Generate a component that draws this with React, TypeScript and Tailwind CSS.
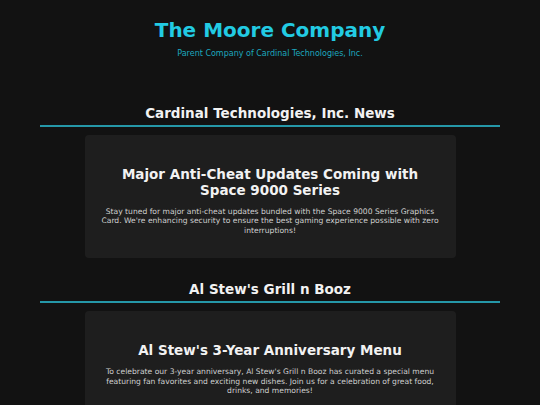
import React from "react";

const font = { fontFamily: '"DejaVu Sans", Verdana, sans-serif' };

function Card({ title, body }: { title: React.ReactNode; body: string }) {
  return (
    <div className="mx-auto mt-2 w-[371px] rounded-[4px] bg-[#1e1e1e] px-4 pt-[31px] pb-[23px] text-center">
      <h3 className="text-[13.5px] font-bold leading-[16px] text-[#f2f2f2]">{title}</h3>
      <p className="mt-[9px] text-[7.6px] leading-[9.4px] text-[#cfcfcf]">{body}</p>
    </div>
  );
}

function Section({ heading, children }: { heading: string; children: React.ReactNode }) {
  return (
    <section>
      <h2 className="border-b-2 border-[#2597a8] pb-[4px] text-center text-[13.5px] font-bold leading-[16px] text-[#f2f2f2]">
        {heading}
      </h2>
      {children}
    </section>
  );
}

export default function App() {
  return (
    <div className="min-h-[405px] w-full bg-[#121212]" style={font}>
      <header className="pt-[18px] text-center">
        <h1 className="text-[20px] font-bold leading-[24px] text-[#22cbe3]">The Moore Company</h1>
        <p className="mt-[7px] text-[8px] leading-[10px] text-[#1ca8bf]">
          Parent Company of Cardinal Technologies, Inc.
        </p>
      </header>
      <main className="mx-[40px] mt-[46px] flex flex-col gap-[23px]">
        <Section heading="Cardinal Technologies, Inc. News">
          <Card
            title={
              <>
                Major Anti-Cheat Updates Coming with
                <br />
                Space 9000 Series
              </>
            }
            body="Stay tuned for major anti-cheat updates bundled with the Space 9000 Series Graphics Card. We're enhancing security to ensure the best gaming experience possible with zero interruptions!"
          />
        </Section>
        <Section heading="Al Stew's Grill n Booz">
          <Card
            title="Al Stew's 3-Year Anniversary Menu"
            body="To celebrate our 3-year anniversary, Al Stew's Grill n Booz has curated a special menu featuring fan favorites and exciting new dishes. Join us for a celebration of great food, drinks, and memories!"
          />
        </Section>
      </main>
    </div>
  );
}
